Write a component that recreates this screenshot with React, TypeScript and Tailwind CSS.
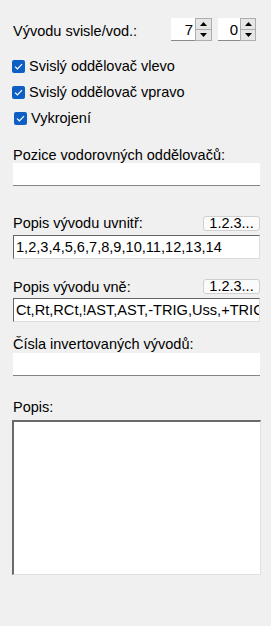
import React from "react";

const font = { fontFamily: '"Liberation Sans", Arial, sans-serif' };

function Spinner({ value, boxW, btnW }: { value: string; boxW: string; btnW: string }) {
  return (
    <div className="flex h-[23px]">
      <div className={`${boxW} h-full bg-white border-b border-[#8a8a8a] flex items-center justify-end pr-[2px] text-[15px] leading-none text-black`}>
        {value}
      </div>
      <div className={`${btnW} h-full flex flex-col`}>
        <div className="flex-1 bg-[#e6e6e6] border border-[#adadad] flex items-center justify-center">
          <svg width="7" height="4" viewBox="0 0 7 4"><path d="M0 4 L3.5 0 L7 4 Z" fill="#000" /></svg>
        </div>
        <div className="flex-1 bg-[#e6e6e6] border border-t-0 border-[#adadad] flex items-center justify-center">
          <svg width="7" height="4" viewBox="0 0 7 4"><path d="M0 0 L7 0 L3.5 4 Z" fill="#000" /></svg>
        </div>
      </div>
    </div>
  );
}

function Check({ label, shift }: { label: string; shift: string }) {
  return (
    <div className={`h-[26px] flex items-center ${shift}`}>
      <div className="w-[13px] h-[13px] rounded-[2px] bg-[#0d5fc4] flex items-center justify-center">
        <svg width="9" height="7" viewBox="0 0 9 7">
          <path d="M1 3.6 L3.4 5.8 L8 1.2" fill="none" stroke="#fff" strokeWidth="1.2" />
        </svg>
      </div>
      <span className="ml-[4px] text-[14.5px] leading-[14px] text-black">{label}</span>
    </div>
  );
}

function SmallBtn() {
  return (
    <div className="w-[57px] h-[15px] rounded-[3px] border border-[#cfcfcf] bg-[#fbfbfb] flex items-center justify-center text-[14.5px] leading-[15px] text-black">
      1.2.3...
    </div>
  );
}

export default function App() {
  return (
    <div style={font} className="w-[271px] h-[626px] bg-[#f0f0f0] pl-[13px] pr-[11px] pt-[18px] flex flex-col text-black overflow-hidden">
      <div className="flex h-[23px] items-center">
        <span className="flex-1 pt-[3px] text-[14.5px] leading-[14px]">Vývodu svisle/vod.:</span>
        <Spinner value="7" boxW="w-[24px]" btnW="w-[17px]" />
        <div className="w-[6px]" />
        <Spinner value="0" boxW="w-[22px]" btnW="w-[16px]" />
        <div className="w-[4px]" />
      </div>

      <div className="mt-[12px] flex flex-col">
        <Check label="Svislý oddělovač vlevo" shift="-ml-[1px]" />
        <Check label="Svislý oddělovač vpravo" shift="-ml-[1px]" />
        <Check label="Vykrojení" shift="ml-[1px]" />
      </div>

      <div className="mt-[17px] text-[14.5px] leading-[14px]">Pozice vodorovných oddělovačů:</div>
      <div className="mt-[1px] h-[23px] w-[247px] bg-white border-b border-[#858585]" />

      <div className="mt-[30px] flex justify-between items-start h-[15px] w-[247px]">
        <span className="text-[14.5px] leading-[14px]">Popis vývodu uvnitř:</span>
        <SmallBtn />
      </div>
      <div className="mt-[4px] h-[24px] w-[247px] bg-white border-l border-t border-[#646464] border-r-[#dcdcdc] border-b-[#dcdcdc] border-r border-b flex items-center pl-[2px] text-[14.6px] leading-none whitespace-nowrap overflow-hidden">
        1,2,3,4,5,6,7,8,9,10,11,12,13,14
      </div>

      <div className="mt-[20px] flex justify-between items-start h-[16px] w-[247px]">
        <span className="pt-[1px] text-[14.5px] leading-[14px]">Popis vývodu vně:</span>
        <SmallBtn />
      </div>
      <div className="mt-[3px] h-[24px] w-[247px] bg-white border-l border-t border-[#646464] border-r-[#dcdcdc] border-b-[#dcdcdc] border-r border-b flex items-center pl-[2px] text-[14.6px] leading-none whitespace-nowrap overflow-hidden">
        Ct,Rt,RCt,!AST,AST,-TRIG,Uss,+TRIG
      </div>

      <div className="mt-[15px] text-[14.5px] leading-[14px]">Čísla invertovaných vývodů:</div>
      <div className="mt-[2px] h-[23px] w-[247px] bg-white border-b border-[#858585]" />

      <div className="mt-[24px] text-[14.5px] leading-[14px]">Popis:</div>
      <div className="mt-[6px] -ml-[1px] h-[155px] w-[249px] bg-white border-l-2 border-t-2 border-[#6a6a6a] border-r border-b border-r-[#e0e0e0] border-b-[#e0e0e0]" />
    </div>
  );
}
